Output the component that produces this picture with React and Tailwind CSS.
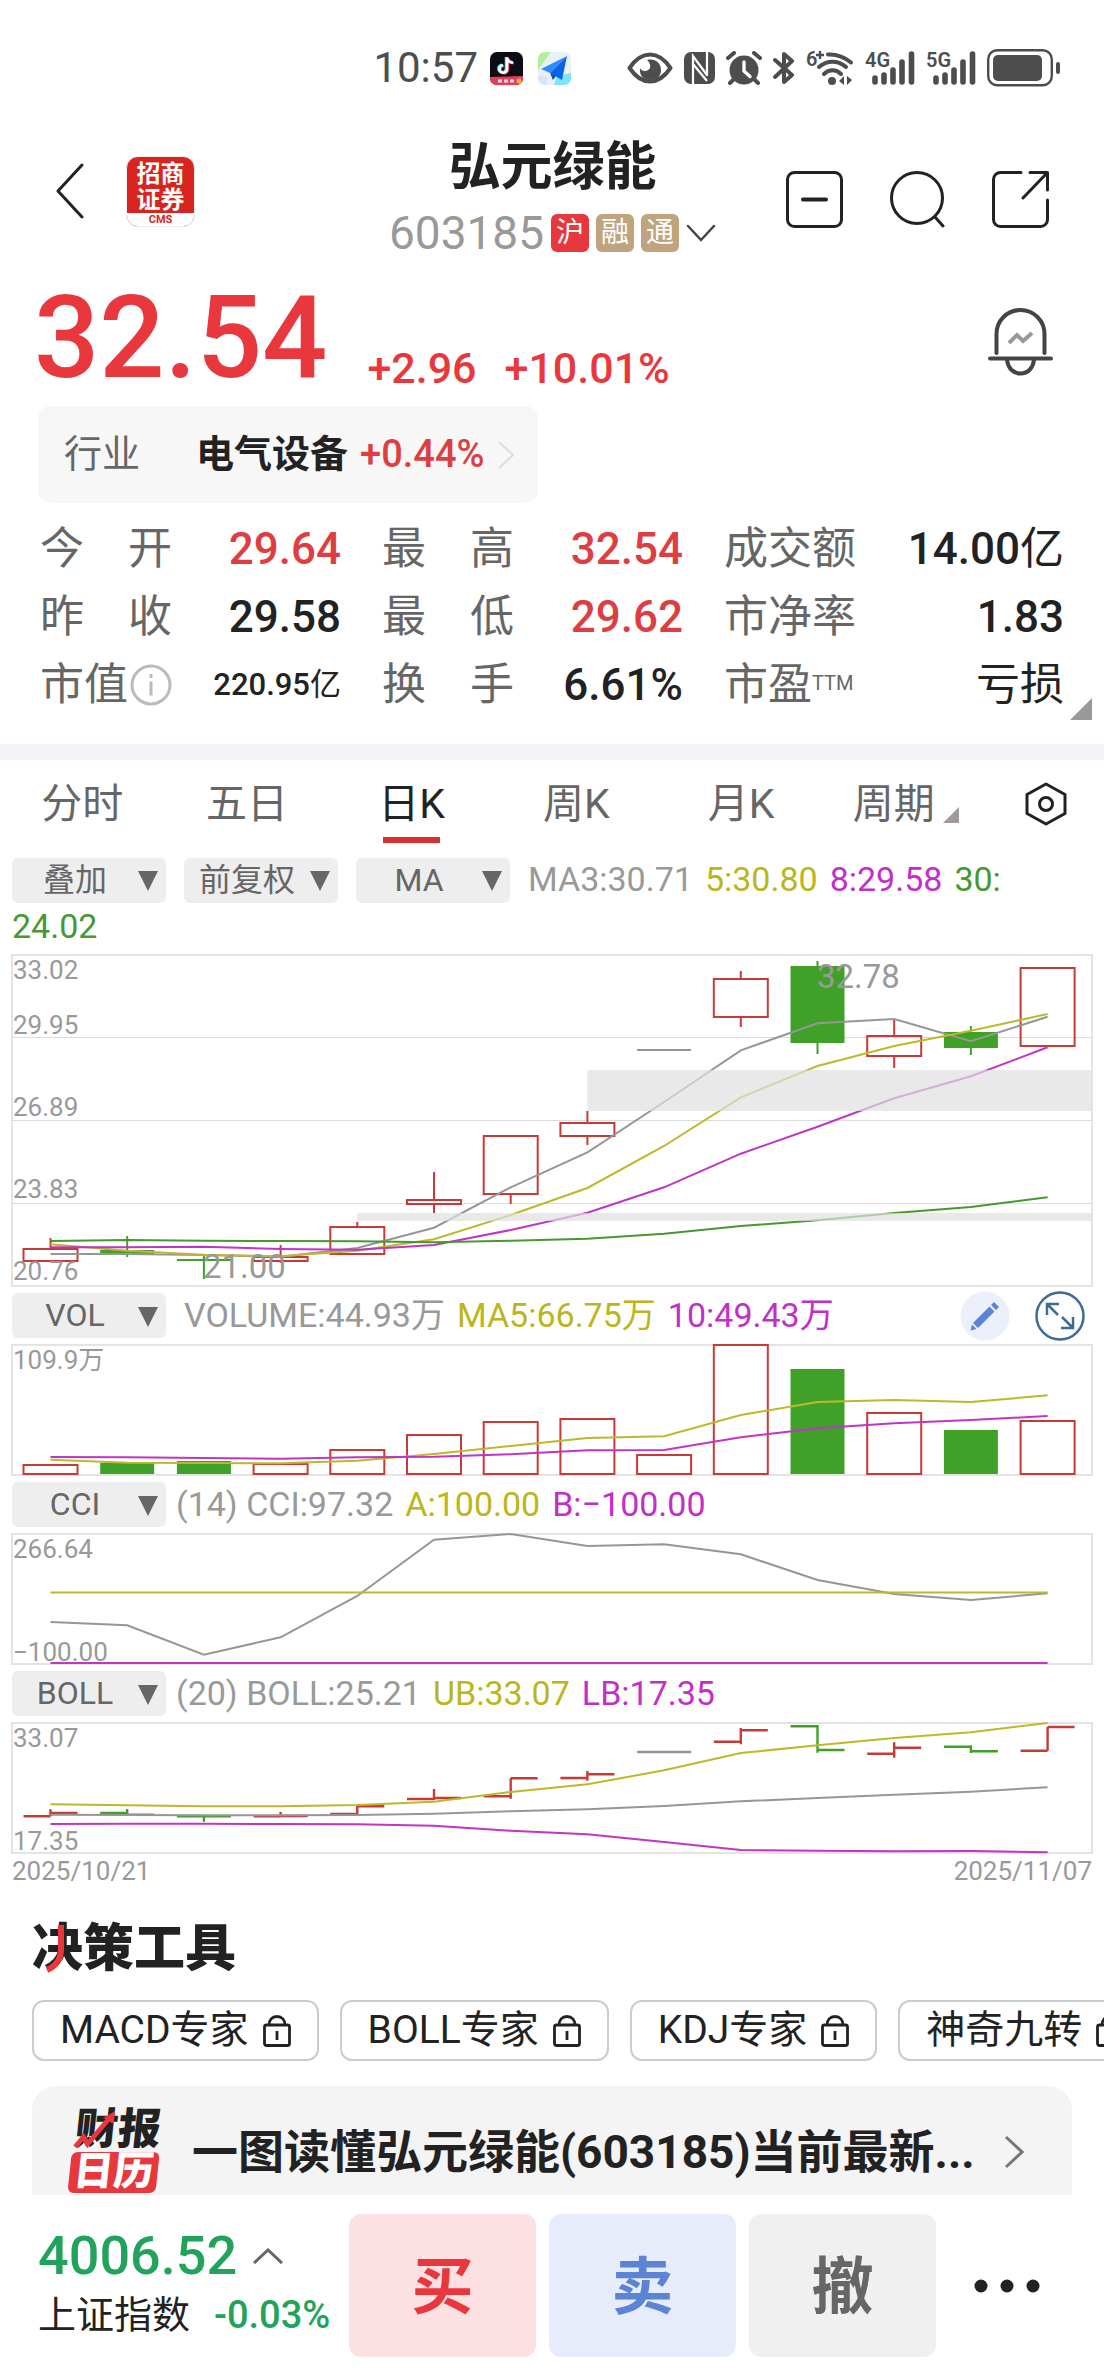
import { useState } from 'react';

const quotes = [
  [
    { label: '今开', value: '29.64', tone: 'up' },
    { label: '最高', value: '32.54', tone: 'up' },
    { label: '成交额', value: '14.00', unit: '亿' },
  ],
  [
    { label: '昨收', value: '29.58' },
    { label: '最低', value: '29.62', tone: 'up' },
    { label: '市净率', value: '1.83' },
  ],
  [
    { label: '市值', value: '220.95', unit: '亿', info: true, small: true },
    { label: '换手', value: '6.61%' },
    { label: '市盈', value: '', unit: '亏损', ttm: true },
  ],
];

const tabs = ['分时', '五日', '日K', '周K', '月K', '周期'];

const RED = '#c73a38';
const GREEN = '#3fa127';
const GRAY = '#969696';
const YELLOW = '#bdb92a';
const PURPLE = '#c035c6';
const DARK_GREEN = '#46982f';

// x centre of the candle in slot i
const cx = (i) => 38.5 + 76.7 * i;

const toPoints = (ys) => ys.map((y, i) => `${cx(i)},${y}`).join(' ');

const candles = [
  { color: RED, top: 294, bottom: 306, high: 283, low: 306 },
  { color: GREEN, top: 295, bottom: 299, high: 281, low: 302 },
  { color: GREEN, top: 304, bottom: 306, high: 301, low: 324 },
  { color: RED, top: 302, bottom: 306, high: 290, low: 308 },
  { color: RED, top: 272, bottom: 299, high: 267, low: 299 },
  { color: RED, top: 245, bottom: 249, high: 217, low: 258 },
  { color: RED, top: 181, bottom: 239, high: 181, low: 249 },
  { color: RED, top: 168, bottom: 181, high: 156, low: 190 },
  { color: GRAY, top: 94, bottom: 96, high: 95, low: 95 },
  { color: RED, top: 24, bottom: 62, high: 16, low: 72 },
  { color: GREEN, top: 11, bottom: 88, high: 6, low: 99 },
  { color: RED, top: 81, bottom: 101, high: 65, low: 113 },
  { color: GREEN, top: 77, bottom: 93, high: 71, low: 100 },
  { color: RED, top: 13, bottom: 91, high: 13, low: 91 },
];

const priceLines = [
  { color: GRAY, ys: [299, 299, 300, 301.7, 293, 272.7, 232.3, 197.3, 147, 95.3, 68.3, 64, 86.3, 61.7] },
  { color: YELLOW, ys: [289.3, 295.7, 299.7, 301.3, 295.7, 284.3, 260, 233, 191, 142.3, 111, 91, 75.7, 59] },
  { color: PURPLE, ys: [292.3, 292.3, 291.7, 294, 294.7, 290, 275, 257.7, 232.3, 198.7, 171.7, 143.3, 121.3, 92.3] },
  { color: DARK_GREEN, ys: [286, 285, 285.7, 286, 286.3, 287.3, 285.7, 283.7, 278.7, 271, 265.3, 258, 252, 242.3] },
];

const volumes = [
  [RED, 120], [GREEN, 118], [GREEN, 116], [RED, 119], [RED, 105], [RED, 90], [RED, 77],
  [RED, 74], [RED, 110], [RED, 0], [GREEN, 24], [RED, 68], [GREEN, 85], [RED, 76],
];

const volumeLines = [
  { color: YELLOW, ys: [114.7, 117.7, 118, 118.3, 115.7, 109, 101, 93, 91.3, 70, 57, 55, 57, 50.3] },
  { color: PURPLE, ys: [112, 112.3, 113, 113.7, 112.3, 111.7, 109.3, 105.3, 105, 92.3, 83.3, 78.3, 75, 71] },
];

const cciLines = [
  { color: GRAY, ys: [88, 91.3, 120.7, 103.3, 62, 5.7, 0, 12, 10.3, 20.3, 46, 60, 66, 59.3] },
  { color: YELLOW, ys: Array(14).fill(58.5) },
  { color: PURPLE, ys: Array(14).fill(129) },
];

// [color, open, high, low, close]
const ohlc = [
  [RED, 93.3, 86.3, 93.3, 90],
  [GREEN, 90, 86, 92.3, 91.7],
  [GREEN, 93.3, 93, 98.7, 93.3],
  [RED, 93.3, 89, 94, 93],
  [RED, 91, 83, 92, 83.3],
  [RED, 76, 66, 77, 75],
  [RED, 73.3, 55.3, 75.7, 55.3],
  [RED, 55, 48, 57.7, 51.3],
  [GRAY, 29, 29, 29, 29],
  [RED, 18.7, 5, 21.3, 7.3],
  [GREEN, 3.3, 2, 29.7, 27],
  [RED, 30.7, 19.3, 34.7, 24.7],
  [GREEN, 23.7, 22.3, 30, 28.3],
  [RED, 27.7, 4, 27.7, 4],
];

const bollLines = [
  { color: YELLOW, ys: [81.3, 82.3, 83.3, 83.3, 82, 78.7, 69, 61.3, 47.3, 30, 22.3, 15, 9.3, 0] },
  { color: GRAY, ys: [91.7, 92, 92.3, 92.3, 92, 90.7, 88.3, 86.3, 83, 78.3, 75, 71.7, 68.7, 64.3] },
  { color: PURPLE, ys: [101, 100.7, 100.7, 101, 101.3, 102.7, 107.7, 111.3, 119, 127, 127.7, 128.3, 128, 129.3] },
];

function Lines({ lines }) {
  return lines.map((line) => (
    <polyline key={line.color} points={toPoints(line.ys)} fill="none" stroke={line.color} strokeWidth="2" />
  ));
}

function Chart({ height, label, children }) {
  return (
    <svg viewBox={`0 0 1080 ${height}`} className="block h-auto w-full overflow-visible" role="img" aria-label={label}>
      <rect x="0" y="0" width="1080" height={height} fill="none" stroke="#e4e4e4" strokeWidth="2" />
      {children}
    </svg>
  );
}

function AxisText({ x = 1, y, children }) {
  return (
    <text x={x} y={y} fontSize="26" fill="#999">
      {children}
    </text>
  );
}

function PriceChart() {
  return (
    <Chart height={331} label="日K">
      {[82.5, 165.5, 248.5].map((y) => (
        <line key={y} x1="0" x2="1080" y1={y} y2={y} stroke="#dcdcdc" />
      ))}
      {candles.map((c, i) => (
        <g key={i} stroke={c.color} strokeWidth="2">
          <line x1={cx(i)} x2={cx(i)} y1={c.high} y2={c.top} />
          <line x1={cx(i)} x2={cx(i)} y1={c.bottom} y2={c.low} />
          <rect
            x={cx(i) - 27}
            y={c.top}
            width="54"
            height={c.bottom - c.top}
            fill={c.color === RED ? 'none' : c.color}
            strokeWidth={c.color === RED ? 2 : 0}
          />
        </g>
      ))}
      <Lines lines={priceLines} />
      <rect x={cx(7)} y="115" width={1080 - cx(7)} height="41" fill="#e0e0e0" fillOpacity="0.7" />
      <rect x={cx(4)} y="258" width={1080 - cx(4)} height="8" fill="#e0e0e0" fillOpacity="0.7" />
      <AxisText y={24}>33.02</AxisText>
      <AxisText y={79}>29.95</AxisText>
      <AxisText y={161}>26.89</AxisText>
      <AxisText y={243}>23.83</AxisText>
      <AxisText y={325}>20.76</AxisText>
      <text x="805" y="33" fontSize="33" fill="#999">32.78</text>
      <text x="191" y="323" fontSize="33" fill="#999">21.00</text>
    </Chart>
  );
}

function VolumeChart() {
  return (
    <Chart height={130} label="VOL">
      {volumes.map(([color, y], i) => (
        <rect
          key={i}
          x={cx(i) - 27}
          y={y}
          width="54"
          height={129 - y}
          fill={color === RED ? 'none' : color}
          stroke={color}
          strokeWidth={color === RED ? 2 : 0}
        />
      ))}
      <Lines lines={volumeLines} />
      <AxisText y={24}>109.9万</AxisText>
    </Chart>
  );
}

function CciChart() {
  return (
    <Chart height={130} label="CCI">
      <Lines lines={cciLines} />
      <AxisText y={24}>266.64</AxisText>
      <AxisText y={127}>−100.00</AxisText>
    </Chart>
  );
}

function BollChart() {
  return (
    <Chart height={130} label="BOLL">
      {ohlc.map(([color, open, high, low, close], i) => (
        <path
          key={i}
          d={`M${cx(i) - 27} ${open}H${cx(i)}M${cx(i)} ${high}V${low}M${cx(i)} ${close}h27`}
          stroke={color}
          strokeWidth="2.4"
          fill="none"
        />
      ))}
      <Lines lines={bollLines} />
      <AxisText y={24}>33.07</AxisText>
      <AxisText y={127}>17.35</AxisText>
    </Chart>
  );
}

function Picker({ label, options }) {
  return (
    <div className="relative h-[45px] w-[154px] shrink-0">
      <select
        aria-label={label}
        className="h-full w-full appearance-none rounded-md bg-[#eee] pr-7 text-center text-[32px] leading-[45px] text-[#666] [text-align-last:center]"
      >
        {options.map((o) => (
          <option key={o}>{o}</option>
        ))}
      </select>
      <svg viewBox="0 0 20 20" className="pointer-events-none absolute top-3.5 right-2 size-5" fill="#666" aria-hidden="true">
        <path d="M0 0h20L10 20z" />
      </svg>
    </div>
  );
}

function Legend({ items }) {
  return (
    <div className="flex gap-3 text-[34px] leading-[45px]">
      {items.map(([text, color]) => (
        <span key={text} className={color}>{text}</span>
      ))}
    </div>
  );
}

function Signal({ name }) {
  return (
    <svg viewBox="0 0 50 34" className="h-[34px] w-[50px] overflow-visible" aria-label={name}>
      <text x="0" y="16" fontSize="20" fontWeight="600" fill="#4d4d4d">{name}</text>
      <path d="M10 27v4M19 24v7M28 19v12M37 11v20M46.500 3v28" stroke="#4d4d4d" strokeWidth="5.600" strokeLinecap="round" />
    </svg>
  );
}

function StatusBar() {
  return (
    <div className="flex h-[136px] items-center justify-end pr-11 text-[#4d4d4d]">
      <div className="mr-14 flex items-center">
        <span className="text-[42px] leading-none">10:57</span>
        <svg viewBox="0 0 33 33" className="ml-3 size-[33px]" aria-hidden="true">
          <defs>
            <clipPath id="appTile"><rect width="33" height="33" rx="7" /></clipPath>
          </defs>
          <g clipPath="url(#appTile)">
            <rect width="33" height="33" fill="#0d0b14" />
            <path d="M0 25l33-1v9H0z" fill="#e2405c" />
            <g fill="none" strokeWidth="2.600">
              <path d="M16 5v11.500a3.800 3.800 0 1 1-4-3.800M16 5c.500 3 3 5 6 5" stroke="#25f4ee" />
              <path d="M18 6v11.500a3.800 3.800 0 1 1-4-3.800M18 6c.500 3 3 5 6 5" stroke="#fe2c55" />
              <path d="M17 5.500V17a3.800 3.800 0 1 1-4-3.800M17 5.500c.500 3 3 5 6 5" stroke="#fff" />
            </g>
            <path d="M8 29h4M14 29h4M20 29h4" stroke="#ffd9de" strokeWidth="3" />
            <circle cx="29" cy="29" r="2.500" fill="#ffb03a" />
          </g>
        </svg>
        <svg viewBox="0 0 33 33" className="ml-[15px] size-[33px]" aria-hidden="true">
          <g clipPath="url(#appTile)">
            <rect width="33" height="33" fill="#e9f1f7" />
            <path d="M0 0h13L0 18z" fill="#b4ee9c" />
            <path d="M16 33l3-9 14-3v12z" fill="#7be3fb" />
            <path d="M0 23l9 2v8H0z" fill="#d5e7f6" />
            <path d="M29 4L3 17l9 4z" fill="#2b8dff" />
            <path d="M29 4L12 21l12 7z" fill="#0a63e6" />
            <path d="M12 21l3 7 3-4z" fill="#0750bf" />
          </g>
        </svg>
      </div>
      <div className="flex items-center gap-[11px]">
        <svg viewBox="0 0 46 32" className="h-8 w-[46px]" aria-hidden="true">
          <path d="M2.500 16C9 6.500 15 2.500 23 2.500S37 6.500 43.500 16C37 25.500 31 29.500 23 29.500S9 25.500 2.500 16z" fill="none" stroke="#4d4d4d" strokeWidth="4" strokeLinejoin="round" />
          <path d="M20 8c8-2 14 3 14 10s-5 10-11 10-11-4-10-12c1.500 4 8 4 10 0 1-3-.500-6-3-8z" fill="#4d4d4d" />
        </svg>
        <svg viewBox="0 0 31 32" className="h-8 w-[31px]" aria-hidden="true">
          <rect width="31" height="32" rx="7" fill="#4d4d4d" />
          <path d="M9 32V4l14 19M9 12l14 17M23 0v24" fill="none" stroke="#fff" strokeWidth="2.200" />
        </svg>
        <svg viewBox="0 0 36 34" className="h-[34px] w-9" aria-hidden="true">
          <circle cx="18" cy="19" r="14.500" fill="#4d4d4d" />
          <path d="M2 7l6-5M34 7l-6-5M7 29l-3 3M29 29l3 3" stroke="#4d4d4d" strokeWidth="4" strokeLinecap="round" />
          <path d="M18 11v9l6 5.500" fill="none" stroke="#fff" strokeWidth="3.400" strokeLinecap="round" />
        </svg>
        <svg viewBox="0 0 22 34" className="h-[34px] w-[22px]" aria-hidden="true">
          <path d="M2 9l17 15-8 7V3l8 7L2 26" fill="none" stroke="#4d4d4d" strokeWidth="4" strokeLinejoin="round" strokeLinecap="round" />
        </svg>
        <svg viewBox="0 0 48 36" className="h-9 w-12 overflow-visible" aria-label="Wi-Fi">
          <text x="0" y="16" fontSize="20" fontWeight="600" fill="#4d4d4d">6</text>
          <path d="M14 1v8M10 5h8" stroke="#4d4d4d" strokeWidth="2.400" />
          <g fill="none" stroke="#4d4d4d" strokeWidth="4" strokeLinecap="round">
            <path d="M22 4.500c9-.500 17 3 23 8" />
            <path d="M13 17c8-7 19-7 27 0" />
            <path d="M18 24c5-5 12-5 17 0" />
          </g>
          <circle cx="26" cy="31" r="4" fill="#4d4d4d" />
          <path d="M38 26v9l-5-4zM41 26v9l5-5z" fill="#4d4d4d" />
        </svg>
        <Signal name="4G" />
        <Signal name="5G" />
        <svg viewBox="0 0 73 38" className="h-[38px] w-[73px]" aria-hidden="true">
          <rect x="1.200" y="1.200" width="63.600" height="35" rx="9" fill="none" stroke="#4d4d4d" strokeWidth="2.400" />
          <rect x="6" y="6" width="49" height="26" rx="5" fill="#4d4d4d" />
          <rect x="69" y="13" width="4" height="12" rx="2" fill="#4d4d4d" />
        </svg>
      </div>
    </div>
  );
}

function Header() {
  const iconProps = {
    viewBox: '0 0 57 57',
    className: 'size-[57px]',
    fill: 'none',
    stroke: '#222',
    strokeWidth: 3,
    strokeLinecap: 'round',
    strokeLinejoin: 'round',
  };

  return (
    <header className="flex h-[130px] items-center">
      <div className="flex flex-1 items-center gap-[42px] pb-5 pl-14">
        <button type="button" aria-label="返回">
          <svg viewBox="0 0 28 56" className="h-14 w-7" fill="none" stroke="#222" strokeWidth="3" strokeLinecap="round" strokeLinejoin="round">
            <path d="M26 2L2 28l24 26" />
          </svg>
        </button>
        <div className="flex h-[71px] w-[69px] flex-col overflow-hidden rounded-xl border border-[#eee] bg-[#d8241f] text-center">
          <span className="pt-1 text-2xl leading-[26px] font-bold text-white">
            招商
            <br />
            证券
          </span>
          <span className="flex-1 bg-white text-[11px] leading-[13px] font-bold text-[#d8241f]">CMS</span>
        </div>
      </div>

      <div className="text-center">
        <h1 className="text-[52px] leading-[64px] font-bold text-[#222]">弘元绿能</h1>
        <div className="flex h-[66px] items-center gap-[7px]">
          <span className="text-[46px] leading-none text-[#999]">603185</span>
          <span className="flex size-[38px] items-center justify-center rounded-md bg-[#e8383d] text-[28px] leading-none text-white">沪</span>
          <span className="flex size-[38px] items-center justify-center rounded-md bg-[#bfa47e] text-[28px] leading-none text-white">融</span>
          <span className="flex size-[38px] items-center justify-center rounded-md bg-[#bfa47e] text-[28px] leading-none text-white">通</span>
          <button type="button" aria-label="切换股票">
            <svg viewBox="0 0 30 18" className="h-[18px] w-[30px]" fill="none" stroke="#444" strokeWidth="2.500" strokeLinecap="round">
              <path d="M2 2l13 14L28 2" />
            </svg>
          </button>
        </div>
      </div>

      <div className="flex flex-1 items-center justify-end gap-[46px] pr-[55px] pb-1">
        <button type="button" aria-label="删除自选">
          <svg {...iconProps}>
            <rect x="1.500" y="1.500" width="54" height="54" rx="7" />
            <path d="M17 28.500h23" strokeWidth="4" />
          </svg>
        </button>
        <button type="button" aria-label="搜索">
          <svg {...iconProps}>
            <circle cx="28" cy="27" r="25.500" />
            <path d="M46 46l8 9" />
          </svg>
        </button>
        <button type="button" aria-label="分享">
          <svg {...iconProps}>
            <path d="M29 1.500H8.500a7 7 0 0 0-7 7v40a7 7 0 0 0 7 7h40a7 7 0 0 0 7-7V29" />
            <path d="M38 1.500h17.500V19M55 2L31 27" />
          </svg>
        </button>
      </div>
    </header>
  );
}

function PriceRow() {
  return (
    <section className="flex h-[140px] items-end pr-[51px] pl-[34px] font-medium text-[#e8383d]">
      <span className="text-[115px] leading-[136px]">32.54</span>
      <span className="mb-4 ml-10 text-[43px] leading-[44px]">+2.96</span>
      <span className="mb-4 ml-7 text-[43px] leading-[44px]">+10.01%</span>
      <button type="button" aria-label="预警" className="mb-[30px] ml-auto">
        <svg viewBox="0 0 65 68" className="h-[68px] w-[65px]" fill="none" stroke="#444" strokeWidth="4" strokeLinecap="round">
          <path d="M8.500 45V26a24 24 0 0 1 48 0v19" />
          <path d="M2 50.500h61" />
          <path d="M19 52c1 8 6 13.500 13.500 13.500S45 60 46 52" />
          <path d="M21 35l8-8 6 6 9-8" stroke="#999" strokeLinecap="butt" />
        </svg>
      </button>
    </section>
  );
}

function QuoteCell({ item }) {
  return (
    <div className="flex items-center justify-between">
      <dt className="flex w-[132px] items-center justify-between text-[44px] text-[#666]">
        {item.info && (
          <>
            <span>{item.label}</span>
            <svg viewBox="0 0 42 42" className="size-[42px]" fill="none" stroke="#bbb" strokeWidth="3" aria-hidden="true">
              <circle cx="21" cy="21" r="19" />
              <path d="M21 17.500v14M21 10v4" />
            </svg>
          </>
        )}
        {item.ttm && (
          <span>
            {item.label}
            <sup className="text-xl leading-none">TTM</sup>
          </span>
        )}
        {!item.info && !item.ttm && item.label.split('').map((ch) => <span key={ch}>{ch}</span>)}
      </dt>
      <dd
        className={`font-medium ${item.small ? 'text-[31px]' : 'text-[44px]'} ${
          item.tone === 'up' ? 'text-[#dd3e42]' : 'text-[#222]'
        }`}
      >
        {item.value}
        {item.unit && <span className="font-normal">{item.unit}</span>}
      </dd>
    </div>
  );
}

function Tabs() {
  const [active, setActive] = useState('日K');

  return (
    <nav className="flex items-start">
      <div className="flex flex-1">
        {tabs.map((tab) => (
          <button key={tab} type="button" onClick={() => setActive(tab)} className="flex flex-1 flex-col items-center pt-3">
            <span
              className={`flex items-center gap-2 text-[41px] leading-[65px] ${
                active === tab ? 'text-[#222]' : 'text-[#666]'
              }`}
            >
              {tab}
              {tab === '周期' && (
                <svg viewBox="0 0 16 16" className="mt-5 size-4" fill="#a19999" aria-hidden="true">
                  <path d="M16 0v16H0z" />
                </svg>
              )}
            </span>
            <span className={`h-1.5 w-[57px] ${active === tab ? 'bg-[#d92e2e]' : 'bg-transparent'}`} />
          </button>
        ))}
      </div>
      <button type="button" aria-label="设置" className="flex w-[116px] justify-center pt-[22px]">
        <svg viewBox="0 0 42 44" className="h-11 w-[42px]" fill="none" stroke="#222" strokeWidth="3" strokeLinejoin="round">
          <path d="M21 2l19 10.500v19L21 42 2 31.500v-19z" />
          <circle cx="21" cy="22" r="6.500" />
        </svg>
      </button>
    </nav>
  );
}

function Charts() {
  return (
    <section className="px-3 pt-3.5">
      <div className="mb-1.5 flex flex-wrap items-center gap-y-0.5 text-[34px] leading-[45px]">
        <div className="mr-[18px] flex gap-[18px]">
          <Picker label="叠加" options={['叠加']} />
          <Picker label="复权" options={['前复权', '后复权', '不复权']} />
          <Picker label="主图指标" options={['MA', 'BOLL']} />
        </div>
        <span className="mr-3 text-[#999]">MA3:30.71</span>
        <span className="mr-3 text-[#bab61c]">5:30.80</span>
        <span className="mr-3 text-[#c22fc8]">8:29.58</span>
        <span className="mr-10 text-[#46982f]">30:</span>
        <span className="text-[#46982f]">24.02</span>
      </div>
      <PriceChart />

      <div className="my-[7px] flex h-[45px] items-center gap-[18px]">
        <Picker label="副图一" options={['VOL', 'MACD']} />
        <Legend
          items={[
            ['VOLUME:44.93万', 'text-[#999]'],
            ['MA5:66.75万', 'text-[#bab61c]'],
            ['10:49.43万', 'text-[#c22fc8]'],
          ]}
        />
        <div className="mr-[7px] ml-auto flex gap-[25px]">
          <button type="button" aria-label="画线">
            <svg viewBox="0 0 50 50" className="size-[50px]">
              <circle cx="25" cy="25" r="24.500" fill="#ebf0fb" />
              <path d="M34 11l5 5-3 3-5-5zM29.500 15.500l5 5L18 37l-5-5zM12 33.500l4.500 4.500-6 1.500z" fill="#5b84d6" />
            </svg>
          </button>
          <button type="button" aria-label="全屏">
            <svg viewBox="0 0 50 50" className="size-[50px]" fill="none" stroke="#3f6a94" strokeWidth="2.500">
              <circle cx="25" cy="25" r="23.500" />
              <path d="M12 24V13h12M12 13l11 11M38 26v11H26M38 37L27 26" />
            </svg>
          </button>
        </div>
      </div>
      <VolumeChart />

      <div className="my-[7px] flex h-[45px] items-center gap-2.5">
        <Picker label="副图二" options={['CCI', 'KDJ']} />
        <Legend
          items={[
            ['(14) CCI:97.32', 'text-[#999]'],
            ['A:100.00', 'text-[#bab61c]'],
            ['B:−100.00', 'text-[#c22fc8]'],
          ]}
        />
      </div>
      <CciChart />

      <div className="my-[7px] flex h-[45px] items-center gap-2.5">
        <Picker label="副图三" options={['BOLL', 'RSI']} />
        <Legend
          items={[
            ['(20) BOLL:25.21', 'text-[#999]'],
            ['UB:33.07', 'text-[#bab61c]'],
            ['LB:17.35', 'text-[#c22fc8]'],
          ]}
        />
      </div>
      <BollChart />
      <div className="flex justify-between text-[26px] leading-9 text-[#999]">
        <span>2025/10/21</span>
        <span>2025/11/07</span>
      </div>
    </section>
  );
}

function Tools() {
  return (
    <section className="pt-[30px] pl-8">
      <h2 className="relative text-[51px] leading-[60px] font-black text-[#222]">
        决策工具
        <svg viewBox="0 0 22 48" className="absolute top-1.5 left-3 h-12 w-[22px]" fill="none" stroke="#e8383d" strokeWidth="6" aria-hidden="true">
          <path d="M17 0v24c0 10-5 17-14 21" />
        </svg>
      </h2>
      <div className="mt-[21px] flex gap-[21px] overflow-hidden">
        {['MACD专家', 'BOLL专家', 'KDJ专家', '神奇九转'].map((name) => (
          <button
            key={name}
            type="button"
            className="flex h-[61px] shrink-0 items-center gap-3.5 rounded-xl border-2 border-[#ccc] px-[26px] text-[39px] leading-none text-[#222]"
          >
            {name}
            <svg viewBox="0 0 28 32" className="h-8 w-7" fill="none" stroke="#222" strokeWidth="2.800" aria-hidden="true">
              <rect x="1.500" y="10" width="25" height="20.500" rx="2" />
              <path d="M6 10c0-5 3-8.500 8-8.500s8 3.500 8 8.500M14 16v9" />
            </svg>
          </button>
        ))}
      </div>
      <a href="#report" className="mt-[25px] mr-8 flex h-[109px] items-start overflow-hidden rounded-t-3xl bg-[#f4f4f4] pr-12 pl-10 text-[#222]">
        <span className="relative mt-5 flex w-[88px] shrink-0 -skew-x-6 flex-col items-center font-black">
          <span className="text-[43px] leading-[46px]">财报</span>
          <svg viewBox="0 0 44 40" className="absolute top-1 left-0 h-10 w-11" fill="none" stroke="#e8383d" strokeWidth="5" aria-hidden="true">
            <path d="M3 37l7-10 5 7L35 7" />
            <path d="M28 8l11-7v13z" fill="#e8383d" stroke="none" />
          </svg>
          <span className="h-[41px] w-full rounded-md bg-[#e8383d] text-center text-[40px] leading-[39px] text-white">日历</span>
        </span>
        <span className="ml-8 text-[46px] leading-[132px] font-bold whitespace-nowrap">一图读懂弘元绿能(603185)当前最新...</span>
        <svg viewBox="0 0 20 34" className="mt-[49px] ml-auto h-[34px] w-5 shrink-0" fill="none" stroke="#777" strokeWidth="3" aria-hidden="true">
          <path d="M2 2l16 15L2 32" />
        </svg>
      </a>
    </section>
  );
}

function TradeBar() {
  return (
    <footer className="flex items-center py-[19px] pr-16 pl-[38px]">
      <div className="mb-2 w-[311px] shrink-0">
        <div className="flex items-center gap-4">
          <span className="text-[54px] leading-[66px] font-medium text-[#21a35c]">4006.52</span>
          <svg viewBox="0 0 30 16" className="h-4 w-[30px]" fill="none" stroke="#666" strokeWidth="3" aria-hidden="true">
            <path d="M1 15L15 2l14 13" />
          </svg>
        </div>
        <div className="flex gap-6 text-[38px] leading-[52px]">
          <span className="text-[#222]">上证指数</span>
          <span className="font-medium text-[#21a35c]">-0.03%</span>
        </div>
      </div>
      <div className="flex flex-1 gap-[13px] text-[62px] font-bold">
        <button type="button" className="h-[143px] flex-1 rounded-xl bg-[#fde0e2] pt-1 text-[#e8383d]">买</button>
        <button type="button" className="h-[143px] flex-1 rounded-xl bg-[#e6ecf9] pt-1 text-[#5b84d6]">卖</button>
        <button type="button" className="h-[143px] flex-1 rounded-xl bg-[#f0f0f0] pt-1 text-[#666]">撤</button>
      </div>
      <button type="button" aria-label="更多" className="ml-[38px]">
        <svg viewBox="0 0 66 14" className="h-3.5 w-[66px]" fill="#222">
          <circle cx="7" cy="7" r="6.500" />
          <circle cx="33" cy="7" r="6.500" />
          <circle cx="59" cy="7" r="6.500" />
        </svg>
      </button>
    </footer>
  );
}

export default function App() {
  return (
    <div className="overflow-hidden bg-white font-[Roboto,'Noto_Sans_CJK_SC',sans-serif]" lang="zh-CN">
      <StatusBar />
      <Header />
      <PriceRow />

      <a href="#industry" className="ml-[38px] flex h-[97px] w-[500px] items-center rounded-xl bg-[#f7f7f7] pl-[26px] text-[38px]">
        <span className="text-[#666]">行业</span>
        <span className="ml-14 font-bold text-[#222]">电气设备</span>
        <span className="ml-3 font-medium text-[#dd3e42]">+0.44%</span>
        <svg viewBox="0 0 16 28" className="ml-3.5 h-7 w-4" fill="none" stroke="#ddd" strokeWidth="2" aria-hidden="true">
          <path d="M1 1l14 13L1 27" />
        </svg>
      </a>

      <section className="relative pt-3 pb-[25px]">
        <dl className="grid grid-cols-[301fr_301fr_340fr] gap-x-[41px] px-10 leading-[68px]">
          {quotes.flat().map((item) => (
            <QuoteCell key={item.label} item={item} />
          ))}
        </dl>
        <svg viewBox="0 0 22 22" className="absolute right-3 bottom-6 size-[22px]" fill="#999" aria-hidden="true">
          <path d="M22 0v22H0z" />
        </svg>
      </section>

      <div className="h-4 bg-[#f1f3f6]" />

      <Tabs />
      <Charts />
      <Tools />
      <TradeBar />
    </div>
  );
}
